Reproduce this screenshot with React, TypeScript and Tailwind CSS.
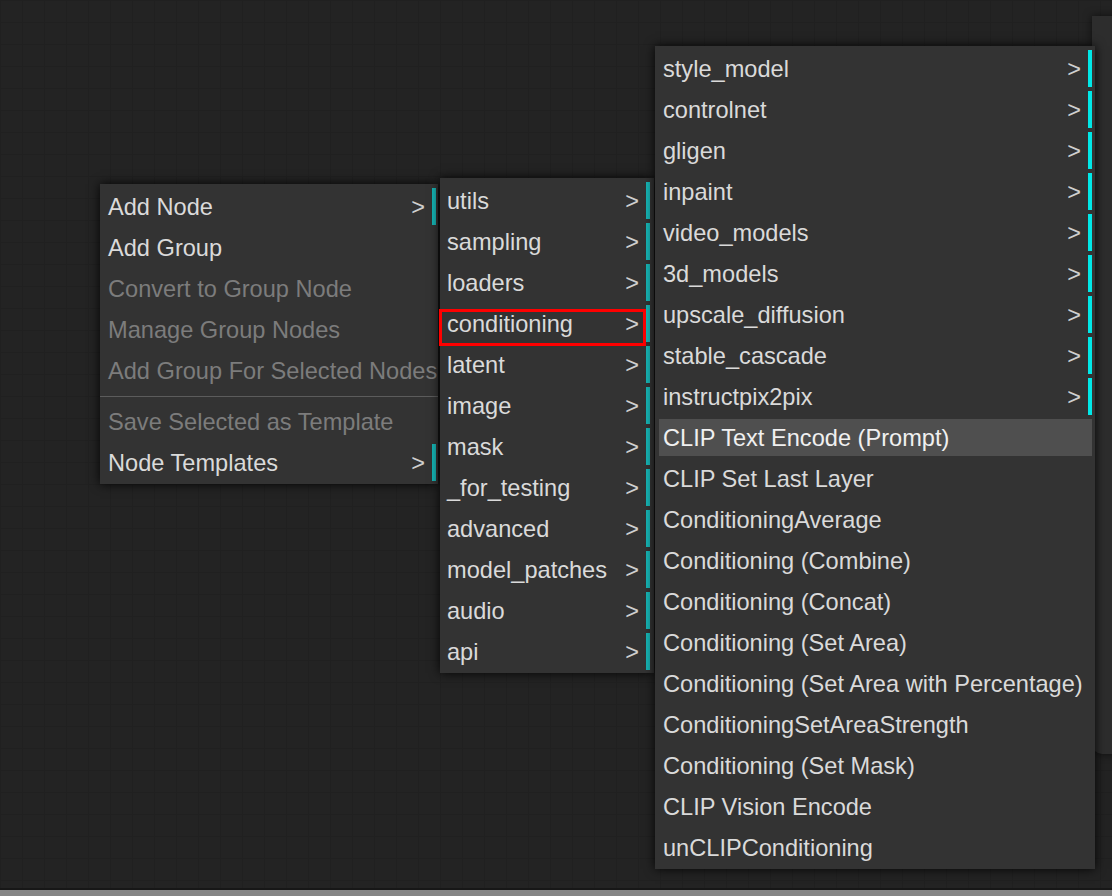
import React from "react";

type Entry = {
	label: string;
	sub?: boolean;
	disabled?: boolean;
	active?: boolean;
	separator?: boolean;
};

const mainMenu: Entry[] = [
	{ label: "Add Node", sub: true },
	{ label: "Add Group" },
	{ label: "Convert to Group Node", disabled: true },
	{ label: "Manage Group Nodes", disabled: true },
	{ label: "Add Group For Selected Nodes", disabled: true },
	{ label: "", separator: true },
	{ label: "Save Selected as Template", disabled: true },
	{ label: "Node Templates", sub: true },
];

const categories: Entry[] = [
	"utils",
	"sampling",
	"loaders",
	"conditioning",
	"latent",
	"image",
	"mask",
	"_for_testing",
	"advanced",
	"model_patches",
	"audio",
	"api",
].map(label => ({ label, sub: true }));

const conditioning: Entry[] = [
	...[
		"style_model",
		"controlnet",
		"gligen",
		"inpaint",
		"video_models",
		"3d_models",
		"upscale_diffusion",
		"stable_cascade",
		"instructpix2pix",
	].map(label => ({ label, sub: true })),
	{ label: "CLIP Text Encode (Prompt)", active: true },
	...[
		"CLIP Set Last Layer",
		"ConditioningAverage",
		"Conditioning (Combine)",
		"Conditioning (Concat)",
		"Conditioning (Set Area)",
		"Conditioning (Set Area with Percentage)",
		"ConditioningSetAreaStrength",
		"Conditioning (Set Mask)",
		"CLIP Vision Encode",
		"unCLIPConditioning",
	].map(label => ({ label })),
];

const MenuItem = ({ entry, bright }: { entry: Entry; bright?: boolean }) => {
	if (entry.separator) {
		return (
			<div className="h-[6px] -ml-[4px] -mr-[2px] flex items-center">
				<div className="h-px w-full bg-[#5c5c5c]" />
			</div>
		);
	}
	return (
		<div
			className={`h-[37px] flex items-center pl-[4px] pt-[3px] whitespace-nowrap ${
				entry.active ? "bg-[#4f4f4f] text-[#f0f0f0]" : ""
			} ${entry.disabled ? "text-[#7c7c7c]" : entry.active ? "" : "text-[#dadada]"} ${
				entry.sub
					? bright
						? "border-r-4 border-[#00e8e8]"
						: "border-r-4 border-[#16b3b3]"
					: ""
			}`}>
			<span>{entry.label}</span>
			{entry.sub && (
				<span className="ml-auto pr-[7px] text-[#cfcfcf]">&gt;</span>
			)}
		</div>
	);
};

const App = () => {
	return (
		<div className="w-[1112px] h-[896px] flex flex-col overflow-hidden bg-[#222222] font-['Liberation_Sans',Arial,sans-serif] text-[23.6px] leading-none">
			{/* canvas */}
			<div className="relative flex-1 bg-[#232323] bg-[linear-gradient(to_right,#202020_1px,transparent_1px),linear-gradient(to_bottom,#202020_1px,transparent_1px)] bg-size-[22px_22px]">
				{/* side panel peeking at the right */}
				<div className="absolute left-[1092px] top-[16px] w-[40px] h-[738px] bg-[#2d2d2d] rounded-bl-[10px] shadow-[0_0_8px_rgba(0,0,0,0.6)]" />

				{/* main context menu */}
				<div className="absolute left-[100px] top-[184px] w-[338px] bg-[#333333] pl-[4px] pr-[2px] pt-[4px] pb-[3px] flex flex-col gap-[4px] shadow-[0_0_10px_rgba(0,0,0,0.9)]">
					{mainMenu.map((e, i) => (
						<MenuItem key={i} entry={e} />
					))}
				</div>

				{/* node categories */}
				<div className="absolute left-[440px] top-[178px] w-[214px] bg-[#333333] pl-[3px] pr-[4px] pt-[4px] pb-[3px] flex flex-col gap-[4px] shadow-[0_0_10px_rgba(0,0,0,0.9)]">
					{categories.map((e, i) => (
						<MenuItem key={i} entry={e} />
					))}
					<div className="absolute left-[-1px] top-[131px] w-[207px] h-[37px] border-[3px] border-[#ff0000]" />
				</div>

				{/* conditioning submenu */}
				<div className="absolute left-[655px] top-[46px] w-[440px] bg-[#333333] pl-[4px] pr-[3px] pt-[4px] pb-[3px] flex flex-col gap-[4px] shadow-[0_0_10px_rgba(0,0,0,0.9)]">
					{conditioning.map((e, i) => (
						<MenuItem key={i} entry={e} bright />
					))}
				</div>
			</div>
			{/* bottom bar */}
			<div className="h-[8px] border-t-2 border-[#171717] bg-[#858585]" />
		</div>
	);
};

export default App;
